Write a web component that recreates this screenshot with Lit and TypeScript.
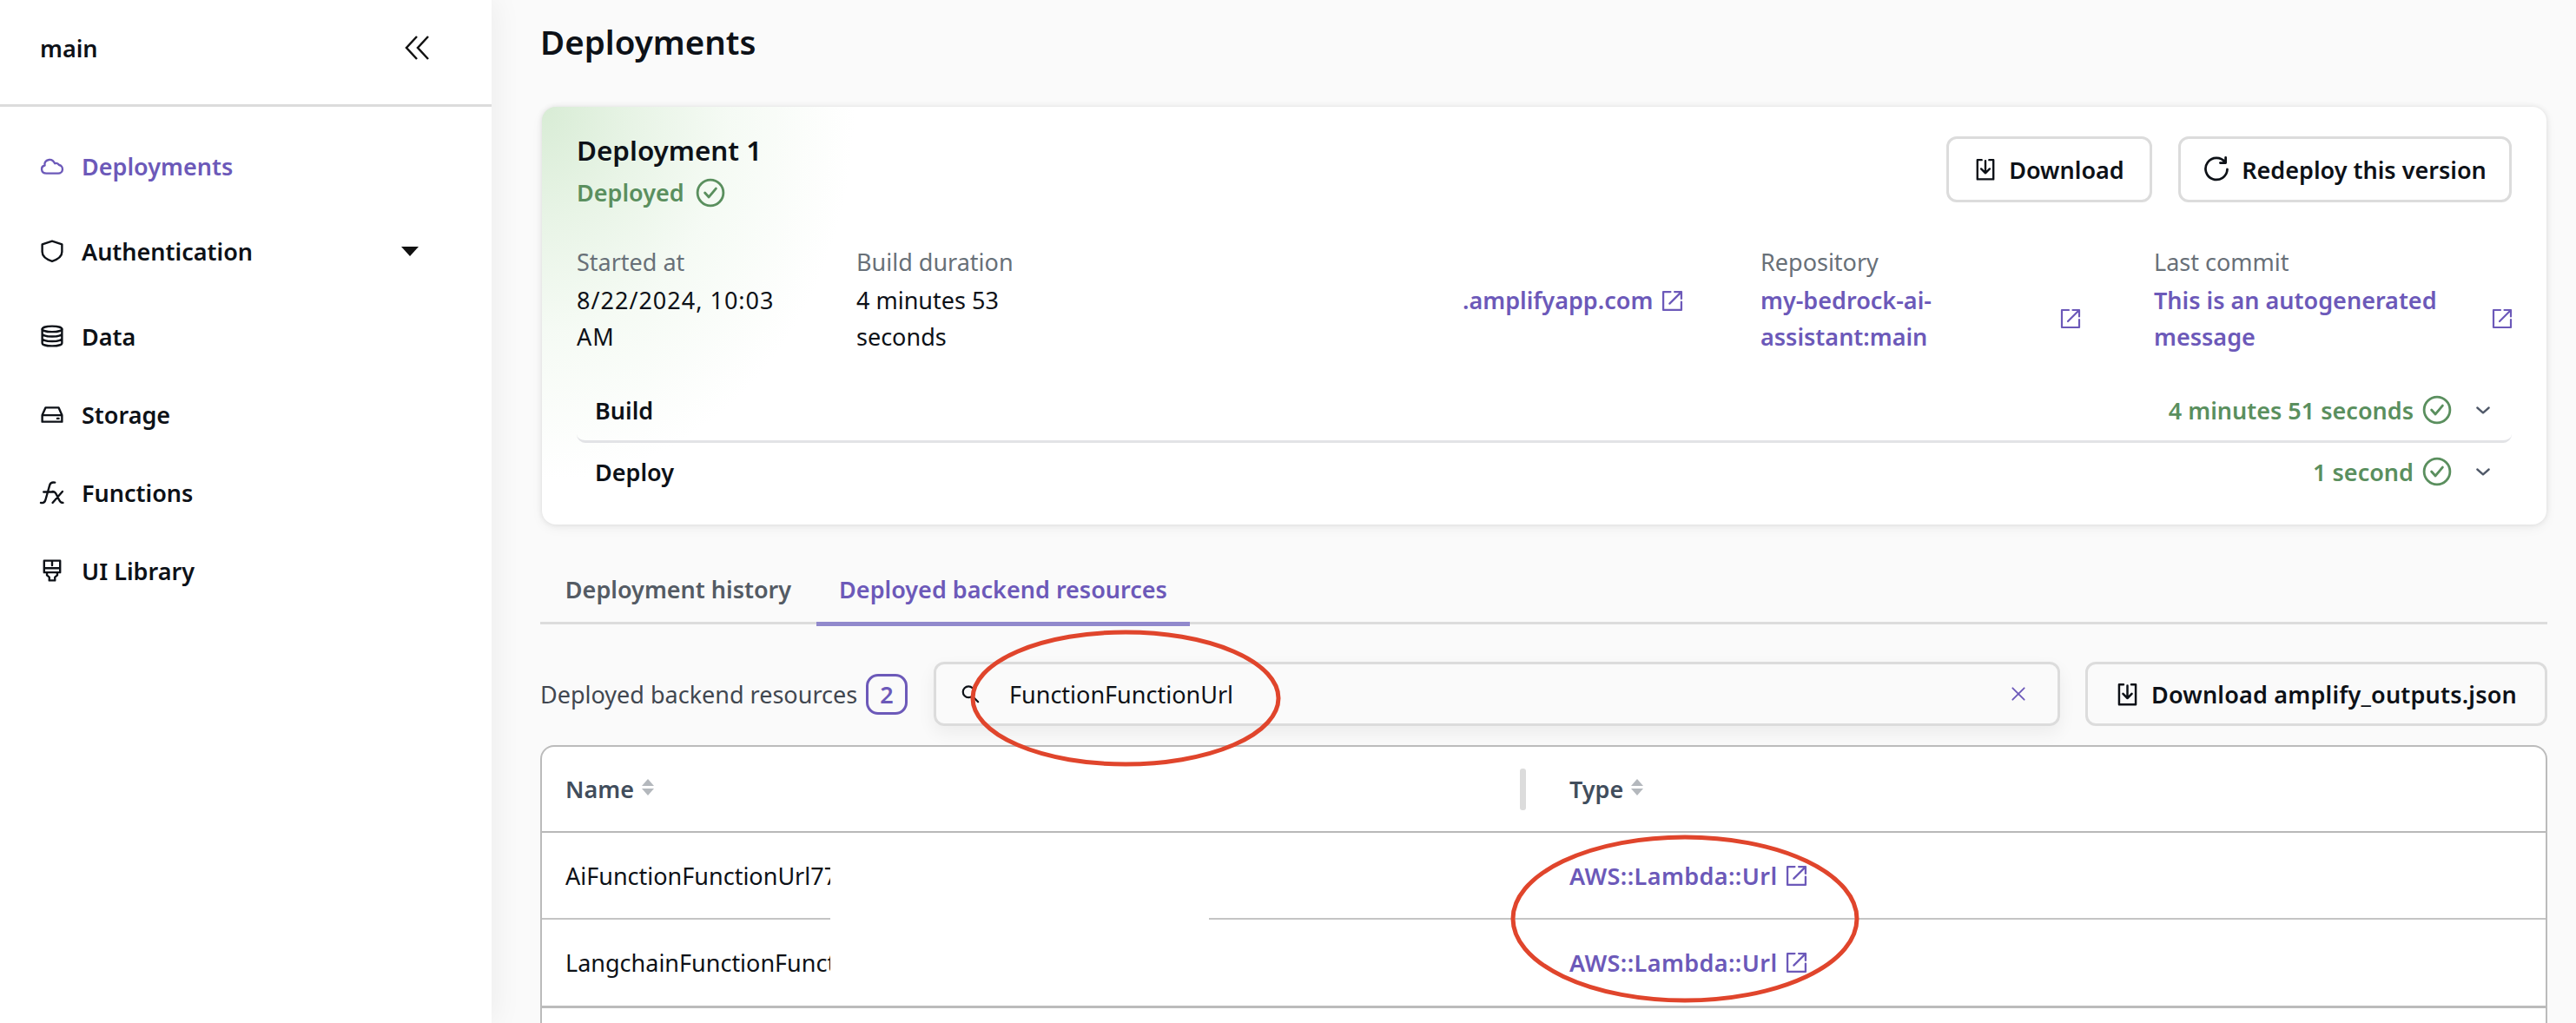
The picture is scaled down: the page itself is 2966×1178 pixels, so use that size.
import { LitElement, html, css, svg } from "lit";
import { customElement } from "lit/decorators.js";

const icon = (size: number, body: unknown, stroke = 2.2, vb = 24) => html`<svg
  class="icon"
  width=${size}
  height=${size}
  viewBox="0 0 ${vb} ${vb}"
  fill="none"
  stroke="currentColor"
  stroke-width=${stroke}
  stroke-linecap="round"
  stroke-linejoin="round"
>${body}</svg>`;

const cloud = svg`<path d="M6 20h12.500a4.500 4.500 0 0 0 1-8.900C18 9 16 9 15 9.500 13.500 6.500 11 5 8.500 5.500 5 6 3.500 9 4.200 11.500 1.500 12 .8 14 1 16c.3 2.500 2.500 4 5 4z"/>`;
const shield = svg`<path d="M12 1.500 22.500 5v8c0 5-4.500 8-10.500 10C6 21 1.500 18 1.500 13V5z"/>`;
const database = svg`<ellipse cx="12" cy="4.500" rx="10.500" ry="3"/><path d="M1.500 4.500v15c0 1.700 4.700 3 10.500 3s10.500-1.300 10.500-3v-15M1.500 9.500c0 1.700 4.700 3 10.500 3s10.500-1.300 10.500-3M1.500 14.500c0 1.700 4.700 3 10.500 3s10.500-1.300 10.500-3"/>`;
const drive = svg`<path d="M1.500 13 5 5h14l3.500 8v7h-21zM1.500 13h21"/><path d="M17.500 16.500h1.500"/>`;
const fx = svg`<path d="M0 23c2 .5 4 0 4.800-2.500L9.500 4c.8-2.500 3-3 5.500-2.500M3 11.500h10M12.500 11c2 0 3 1 4 3l3 6c1 2 2 3 4 3M12.500 23l10.500-12"/>`;
const brush = svg`<path d="M3.500 1.500h17V14h-17zM3.500 9.500h17M12 1.500v5M6.500 14v3l2.500 2v3.500h6V19l2.500-2v-3"/>`;
const download = svg`<path d="M8 2H3.500v20.500h17V2H16M12 3v13M7.500 11.500 12 16l4.500-4.500"/>`;
const redo = svg`<path d="M20 5.500A10 10 0 1 0 22 12M20.500 1v5h-5"/>`;
const external = svg`<path d="M10 2H2v20h20v-9M14.500 2H22v7.500M22 2 9 15"/>`;
const check = svg`<circle cx="12" cy="12" r="10.500"/><path d="m7.500 12 3.200 3.500 5.800-7"/>`;
const chevron = svg`<path d="m4 9 8 7 8-7"/>`;
const search = svg`<circle cx="10" cy="9.500" r="7"/><path d="m15 15 7 7"/>`;
const close = svg`<path d="m4 4 16 16M20 4 4 20"/>`;

const nav = [
  { label: "Deployments", icon: cloud, active: true },
  { label: "Authentication", icon: shield, caret: true },
  { label: "Data", icon: database },
  { label: "Storage", icon: drive },
  { label: "Functions", icon: fx },
  { label: "UI Library", icon: brush },
];

const sortIcon = html`<span class="sort"><i class="up"></i><i class="down"></i></span>`;

@customElement("app-root")
export class AppRoot extends LitElement {
  static styles = css`
    :host {
      display: flex;
      position: relative;
      width: 2966px;
      height: 1178px;
      overflow: hidden;
      background: #fafafa;
      color: #0d1117;
      font-family: "Noto Sans", "Open Sans", sans-serif;
      font-size: 27px;
    }
    .icon { display: block; flex: none; overflow: visible; }

    .sidebar {
      flex: none;
      width: 566px;
      background: #fff;
      box-shadow: 6px 0 30px rgba(0, 0, 0, 0.05);
      z-index: 1;
    }
    .side-head {
      display: flex;
      align-items: center;
      justify-content: space-between;
      height: 123px;
      padding: 0 70px 10px 46px;
      box-sizing: border-box;
      border-bottom: 3px solid #dcdcdc;
      font-weight: 600;
    }
    .chevrons { width: 28px; height: 30px; color: #111; margin-right: 2px; }
    .side-nav { padding-top: 23px; }
    .nav-item {
      display: flex;
      align-items: center;
      height: 90px;
      padding: 0 84px 0 47px;
      font-weight: 600;
    }
    .nav-item:nth-child(2), .nav-item:nth-child(3) { margin-top: 8px; }
    .nav-item.active { color: #6c59b9; }
    .nav-item .icon { margin-right: 21px; }
    .caret {
      margin-left: auto;
      width: 0;
      height: 0;
      border-left: 10px solid transparent;
      border-right: 10px solid transparent;
      border-top: 11px solid #111;
    }

    .main {
      flex: 1;
      min-width: 0;
      display: flex;
      flex-direction: column;
      padding: 0 33px 0 56px;
    }
    h1 {
      margin: 0 0 27px;
      height: 96px;
      line-height: 96px;
      font-size: 38.500px;
      font-weight: 600;
    }

    .card {
      position: relative;
      margin-left: 2px;
      margin-right: 1px;
      height: 481px;
      box-sizing: border-box;
      padding: 28px 40px 0;
      border-radius: 16px;
      background:
        radial-gradient(ellipse 360px 430px at 0 0, #d8ecd5 0%, #e8f4e6 30%, rgba(244, 250, 243, 0.9) 60%, rgba(255, 255, 255, 0) 100%),
        #fff;
      box-shadow: 0 0 6px rgba(0, 0, 0, 0.1), 0 4px 14px rgba(0, 0, 0, 0.05);
    }
    .card-head { display: flex; justify-content: space-between; }
    .card-title { font-size: 31.400px; font-weight: 600; line-height: 44px; }
    .status {
      display: flex;
      align-items: center;
      gap: 13px;
      margin-top: 5px;
      line-height: 44px;
      color: #5a8f5e;
      font-weight: 600;
    }
    .actions { display: flex; gap: 30px; margin-top: 6px; }
    .btn {
      display: flex;
      align-items: center;
      justify-content: center;
      gap: 14px;
      height: 76px;
      box-sizing: border-box;
      border: 3px solid #dcdcdc;
      border-radius: 12px;
      background: #fff;
      font-weight: 600;
      white-space: nowrap;
    }
    .btn.dl { width: 237px; }
    .btn.redeploy { width: 384px; }

    .meta {
      display: grid;
      grid-template-columns: 322px 698px 343px 453px 411px;
      margin-top: 37px;
      line-height: 42px;
    }
    .meta .label { color: #687078; margin-bottom: 2px; height: 42px; }
    .date { letter-spacing: 1px; }
    .link { color: #6c59b9; font-weight: 600; }
    .link-row { display: flex; align-items: center; gap: 10px; color: #6c59b9; }
    .wide { justify-content: space-between; }
    .meta-repo { width: 369px; }
    .meta-commit { width: 413px; }

    .step {
      display: flex;
      align-items: center;
      justify-content: space-between;
      padding: 0 23px 0 21px;
      font-weight: 600;
    }
    .step.first {
      height: 70px;
      margin-top: 28px;
      border-bottom: 3px solid #e2e3e6;
      border-radius: 0 0 10px 10px;
    }
    .step.last { height: 66px; }
    .step-state { display: flex; align-items: center; gap: 10px; color: #5a8f5e; }
    .step-chevron { color: #4f5868; margin-left: 16px; }

    .tabs { display: flex; margin-top: 33px; height: 82px; border-bottom: 3px solid #dcdcdc; box-sizing: border-box; }
    .tab {
      display: flex;
      align-items: center;
      justify-content: center;
      height: 79px;
      box-sizing: border-box;
      padding-top: 3px;
      color: #545b64;
      font-weight: 600;
    }
    .tab.one { width: 318px; }
    .tab.two { width: 430px; color: #6c59b9; border-bottom: 5px solid #9189cc; height: 84px; }

    .toolbar { display: flex; align-items: center; margin-top: 43px; height: 74px; }
    .toolbar-label { width: 365px; color: #414750; white-space: nowrap; }
    .badge {
      display: flex;
      align-items: center;
      justify-content: center;
      width: 48px;
      height: 47px;
      margin: 0 30px 0 10px;
      box-sizing: border-box;
      border: 3px solid #6c59b9;
      border-radius: 14px;
      color: #6c59b9;
      font-weight: 600;
    }
    .searchbox {
      flex: 1;
      display: flex;
      align-items: center;
      height: 74px;
      padding: 0 35px 0 28px;
      box-sizing: border-box;
      border: 3px solid #dcdcdc;
      border-radius: 12px;
      box-shadow: 0 8px 20px rgba(0, 0, 0, 0.06);
    }
    .searchbox .query { margin-left: 34px; }
    .searchbox .clear { margin-left: auto; color: #6c59b9; }
    .btn.outputs { width: 532px; height: 74px; margin-left: 29px; background: #fafafa; letter-spacing: 0.2px; }

    .table {
      position: relative;
      flex: 1;
      margin-top: 22px;
      border: 2px solid #bbb;
      border-bottom: none;
      border-radius: 16px 16px 0 0;
      background: #fff;
    }
    .table-head {
      display: flex;
      align-items: center;
      height: 97px;
      border-bottom: 2px solid #b8b8b8;
      color: #414d5c;
      font-weight: 600;
    }
    .th { display: flex; align-items: center; gap: 9px; }
    .th.name { width: 1099px; padding-left: 27px; }
    .th.type { margin-left: 50px; }
    .col-sep { width: 7px; height: 48px; border-radius: 3px; background: #dcdcdc; }
    .sort { display: flex; flex-direction: column; gap: 3px; margin-bottom: 4px; }
    .sort i { display: block; width: 0; height: 0; border-left: 7px solid transparent; border-right: 7px solid transparent; }
    .sort .up { border-bottom: 8px solid #b4b8bd; }
    .sort .down { border-top: 8px solid #b4b8bd; }
    .row {
      display: grid;
      grid-template-columns: 1183px 1fr;
      align-items: center;
      height: 98px;
      border-bottom: 2px solid #c4c4c4;
      white-space: nowrap;
    }
    .row.last { height: 99px; border-bottom: 3px solid #bbb; }
    .row .cell-name { padding-left: 27px; overflow: hidden; }
    .row .link { letter-spacing: 0.4px; }
    .redact {
      position: absolute;
      left: 332px;
      top: 125px;
      width: 436px;
      height: 135px;
      background: #fff;
    }

    .marks {
      position: absolute;
      left: 0;
      top: 0;
      pointer-events: none;
      z-index: 2;
    }
  `;

  render() {
    return html`
      <aside class="sidebar">
        <div class="side-head">
          <span>main</span>
          <svg class="chevrons" viewBox="0 0 28 30" fill="none" stroke="currentColor" stroke-width="2.500">
            <path d="M14 2 2 15l12 13M27 2 15 15l12 13" />
          </svg>
        </div>
        <nav class="side-nav">
          ${nav.map(
            (n) => html`<div class="nav-item ${n.active ? "active" : ""}">
              ${icon(26, n.icon)}<span>${n.label}</span>${n.caret ? html`<span class="caret"></span>` : ""}
            </div>`
          )}
        </nav>
      </aside>

      <main class="main">
        <h1>Deployments</h1>
        <section class="card">
          <div class="card-head">
            <div>
              <div class="card-title">Deployment 1</div>
              <div class="status">Deployed ${icon(34, check, 2)}</div>
            </div>
            <div class="actions">
              <div class="btn dl">${icon(26, download)}Download</div>
              <div class="btn redeploy">${icon(30, redo)}Redeploy this version</div>
            </div>
          </div>
          <div class="meta">
            <div>
              <div class="label">Started at</div>
              <div class="date">8/22/2024, 10:03<br />AM</div>
            </div>
            <div>
              <div class="label">Build duration</div>
              <div>4 minutes 53<br />seconds</div>
            </div>
            <div>
              <div class="label"></div>
              <div class="link-row"><span class="link">.amplifyapp.com</span>${icon(25, external)}</div>
            </div>
            <div>
              <div class="label">Repository</div>
              <div class="link-row wide meta-repo"><span class="link">my-bedrock-ai-<br />assistant:main</span>${icon(24, external)}</div>
            </div>
            <div>
              <div class="label">Last commit</div>
              <div class="link-row wide meta-commit"><span class="link">This is an autogenerated<br />message</span>${icon(24, external)}</div>
            </div>
          </div>
          <div class="step first">
            <span>Build</span>
            <span class="step-state">4 minutes 51 seconds ${icon(34, check, 2)}<span class="step-chevron">${icon(20, chevron, 2.8)}</span></span>
          </div>
          <div class="step last">
            <span>Deploy</span>
            <span class="step-state">1 second ${icon(34, check, 2)}<span class="step-chevron">${icon(20, chevron, 2.8)}</span></span>
          </div>
        </section>

        <div class="tabs">
          <div class="tab one">Deployment history</div>
          <div class="tab two">Deployed backend resources</div>
        </div>

        <div class="toolbar">
          <span class="toolbar-label">Deployed backend resources</span>
          <span class="badge">2</span>
          <div class="searchbox">
            ${icon(22, search, 2.400)}
            <span class="query">FunctionFunctionUrl</span>
            <span class="clear">${icon(20, close)}</span>
          </div>
          <div class="btn outputs">${icon(27, download)}Download amplify_outputs.json</div>
        </div>

        <div class="table">
          <div class="table-head">
            <div class="th name">Name ${sortIcon}</div>
            <div class="col-sep"></div>
            <div class="th type">Type ${sortIcon}</div>
          </div>
          <div class="row">
            <div class="cell-name">AiFunctionFunctionUrl77</div>
            <div class="link-row"><span class="link">AWS::Lambda::Url</span>${icon(25, external)}</div>
          </div>
          <div class="row last">
            <div class="cell-name">LangchainFunctionFunct</div>
            <div class="link-row"><span class="link">AWS::Lambda::Url</span>${icon(25, external)}</div>
          </div>
          <div class="redact"></div>
        </div>
      </main>

      <svg class="marks" width="2966" height="1178" fill="none" stroke="#e0452c" stroke-width="5">
        <ellipse cx="1296" cy="804" rx="176" ry="76" />
        <ellipse cx="1940" cy="1058" rx="198" ry="94" />
      </svg>
    `;
  }
}
